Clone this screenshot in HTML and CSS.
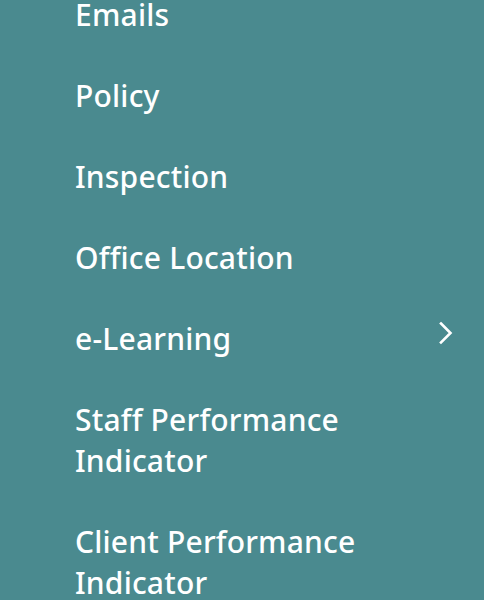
FILE: index.html
```html
<!DOCTYPE html>
<html lang="en">
<head>
<meta charset="utf-8">
<link rel="stylesheet" href="styles.css">
</head>
<body>
<nav class="menu">
  <ul class="menu-list">
    <li class="menu-item"><span class="label">Emails</span></li>
    <li class="menu-item"><span class="label">Policy</span></li>
    <li class="menu-item"><span class="label">Inspection</span></li>
    <li class="menu-item"><span class="label">Office Location</span></li>
    <li class="menu-item"><span class="label">e-Learning</span>
      <svg class="chevron" width="16" height="24" viewBox="0 0 16 24"><path d="M3 2.5 L12.5 12 L3 21.5" fill="none" stroke="#fff" stroke-width="2.6" stroke-linecap="square"/></svg>
    </li>
    <li class="menu-item"><span class="label">Staff Performance<br>Indicator</span></li>
    <li class="menu-item"><span class="label">Client Performance<br>Indicator</span></li>
  </ul>
</nav>
</body>
</html>
```
FILE: styles.css
```css
html, body {
  margin: 0;
  padding: 0;
  background: #4a8a8f;
  height: 100%;
  overflow: hidden;
}
.menu {
  font-family: "Noto Sans", sans-serif;
  color: #fff;
}
.menu-list {
  list-style: none;
  margin: -26px 0 0 0;
  padding: 0 30px 0 75px;
}
.menu-item {
  display: flex;
  justify-content: space-between;
  align-items: center;
  padding: 20px 0;
  font-size: 30px;
  font-weight: 500;
  line-height: 41px;
  letter-spacing: 0.2px;
}
.chevron {
  display: block;
  margin-bottom: 12px;
}
```
